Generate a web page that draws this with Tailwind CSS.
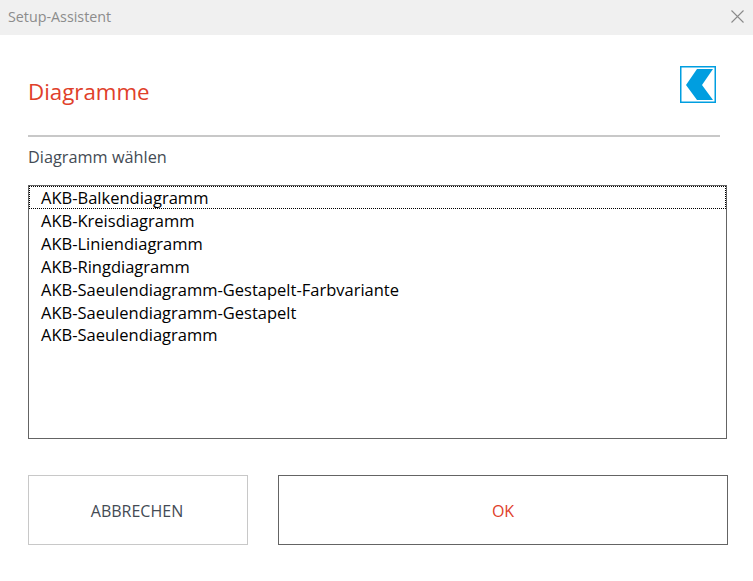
<!DOCTYPE html>
<html lang="de">
<head>
  <meta charset="UTF-8" />
  <title>Setup-Assistent</title>
  <script src="https://cdn.jsdelivr.net/npm/@tailwindcss/browser@4"></script>
</head>
<body class="bg-white h-[581px] w-[753px] overflow-hidden font-['Open_Sans',sans-serif]">
  <!-- Title bar -->
  <header class="h-[35px] bg-[#f0f0f0] flex items-center justify-between pl-2 pr-[9px]">
    <span class="text-[14.3px] text-[#8c8c8c] mb-[2px]">Setup-Assistent</span>
    <svg class="mb-[3px]" width="13" height="13" viewBox="0 0 13 13" fill="none" stroke="#8a8a8a" stroke-width="1.1"><path d="M.5 .5l12 12M12.5 .5l-12 12"/></svg>
  </header>

  <main class="pl-7 pr-[25px]">
    <!-- Heading -->
    <div class="h-[100px] flex items-center justify-between pr-[4px] w-[692px]">
      <h1 class="text-[22.3px] text-[#e0402a] mt-[14px]">Diagramme</h1>
      <svg class="mt-[-2px]" width="36" height="37" viewBox="0 0 36 37">
        <rect x=".75" y=".75" width="34.5" height="35.5" fill="#fff" stroke="#009ee0" stroke-width="1.5"/>
        <path d="M17 3H33L22 19L33 34H17L6 19Z" fill="#009ee0"/>
      </svg>
    </div>
    <div class="h-[2px] w-[692px] bg-[#c8c8c8]"></div>
    <p class="text-[16.3px] text-[#444b54] mt-[9px] leading-[22px]">Diagramm wählen</p>

    <!-- List -->
    <ul class="mt-[17px] w-[699px] h-[254px] border border-[#646464] text-[16.5px] text-black">
      <li class="h-[23px] pl-3 leading-[23px] outline-1 outline-dotted outline-black -outline-offset-1">AKB-Balkendiagramm</li>
      <li class="h-[23px] pl-3 leading-[23px]">AKB-Kreisdiagramm</li>
      <li class="h-[23px] pl-3 leading-[23px]">AKB-Liniendiagramm</li>
      <li class="h-[23px] pl-3 leading-[23px]">AKB-Ringdiagramm</li>
      <li class="h-[23px] pl-3 leading-[23px]">AKB-Saeulendiagramm-Gestapelt-Farbvariante</li>
      <li class="h-[22px] pl-3 leading-[23px]">AKB-Saeulendiagramm-Gestapelt</li>
      <li class="h-[23px] pl-3 leading-[23px]">AKB-Saeulendiagramm</li>
    </ul>

    <!-- Buttons -->
    <div class="mt-9 flex gap-[30px]">
      <button class="w-[220px] h-[70px] border border-[#c8c8c8] text-[16px] text-[#444b54] pt-[2px] pr-[2px]">ABBRECHEN</button>
      <button class="w-[450px] h-[70px] border border-[#646464] text-[16px] text-[#e0402a] pt-[2px]">OK</button>
    </div>
  </main>
</body>
</html>
